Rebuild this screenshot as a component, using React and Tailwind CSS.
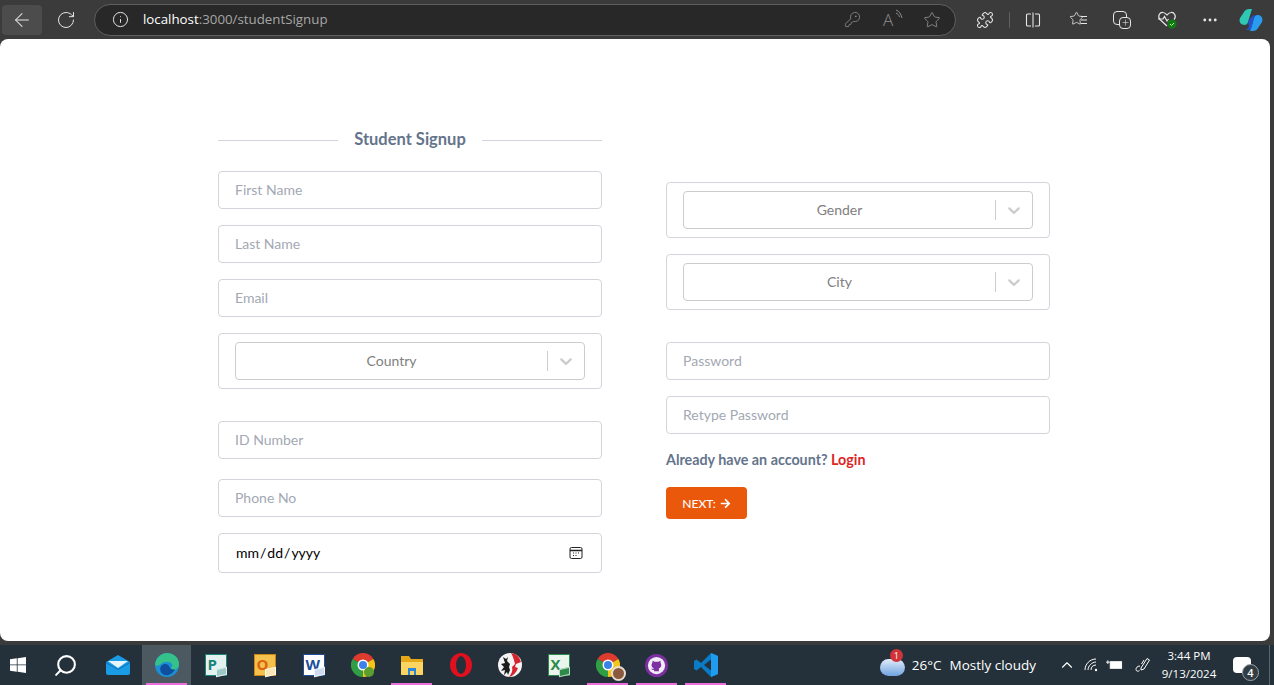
import { ArrowLeft, RotateCw, Info, KeyRound, Star, Puzzle, ChevronUp, Search, MoreHorizontal, Plus } from "lucide-react";
import { FaArrowRight } from "react-icons/fa";

const inputClass =
  "block w-full h-[38px] px-4 pb-0.5 rounded border border-[#d1d5db] bg-white text-sm text-gray-700 placeholder:text-[#a3a8b3] outline-none";

const Field = ({ placeholder, className = "" }) => (
  <input type="text" placeholder={placeholder} className={`${inputClass} ${className}`} />
);

const SelectBox = ({ label, className = "" }) => (
  <div className={`h-14 px-4 flex items-center rounded border border-[#d1d5db] ${className}`}>
    <div className="flex-1 h-[38px] flex items-center rounded border border-[#cccccc]">
      <span className="flex-1 text-center text-sm text-[#808080]">{label}</span>
      <span className="w-px h-5 bg-[#cccccc]" />
      <span className="w-9 flex justify-center text-[#cccccc]">
        <svg viewBox="0 0 20 20" className="w-5 h-5" fill="currentColor">
          <path d="M4.516 7.548c0.436-0.446 1.043-0.481 1.576 0l3.908 3.747 3.908-3.747c0.533-0.481 1.141-0.446 1.574 0 0.436 0.445 0.408 1.197 0 1.615-0.406 0.418-4.695 4.502-4.695 4.502-0.217 0.223-0.502 0.335-0.787 0.335s-0.57-0.112-0.789-0.335c0 0-4.287-4.084-4.695-4.502s-0.436-1.17 0-1.615z" />
        </svg>
      </span>
    </div>
  </div>
);

const Slot = ({ children, active, running }) => (
  <div className={`relative w-[49px] h-10 flex items-center justify-center ${active ? "bg-[#4c5961]" : ""}`}>
    {children}
    {running && <span className="absolute bottom-0 left-1 right-1 h-0.5 bg-[#e86fdc]" />}
  </div>
);

// old office style tile: coloured square with a letter and a little sheet at the corner
const OfficeTile = ({ letter, tile, edge, sheet, color = "text-white" }) => (
  <div className={`relative w-[22px] h-[22px] border text-[15px] leading-[18px] font-bold pl-0.5 ${tile} ${edge} ${color}`}>
    {letter}
    <span className={`absolute -right-px -bottom-px w-[11px] h-2 -skew-y-12 border border-white/70 ${sheet}`} />
  </div>
);

const BrowserBar = () => (
  <div className="h-[39px] flex items-center bg-[#3b3b3b] text-[#e6e6e6]">
    <div className="ml-0.5 w-10 h-[30px] flex items-center justify-center rounded bg-[#4c4c4c]">
      <ArrowLeft size={22} strokeWidth={1.1} />
    </div>
    <div className="w-12 flex justify-center">
      <RotateCw size={20} strokeWidth={1.2} />
    </div>
    <div className="ml-1 w-[862px] h-[32px] flex items-center rounded-full border border-[#5f5f5f] bg-[#282828] font-['Open_Sans',sans-serif]">
      <Info size={17} strokeWidth={1.4} className="ml-[17px]" />
      <span className="ml-[14px] text-[13.3px] text-white font-medium">
        localhost<span className="text-[#a6a6a6] font-normal">:3000/studentSignup</span>
      </span>
      <div className="ml-auto mr-[14px] flex items-center gap-[22px] text-[#8c8c8c]">
        <KeyRound size={17} strokeWidth={1.2} />
        <span className="relative w-[18px] text-[17px] leading-none font-light">
          A
          <svg viewBox="0 0 8 10" className="absolute -top-0.5 -right-0.5 w-2 h-2.5" fill="none" stroke="currentColor">
            <path d="M1 1c3 1 5 4 6 8M1 4c2 1 3 2 3.500 4" />
          </svg>
        </span>
        <Star size={18} strokeWidth={1.2} />
      </div>
    </div>
    <Puzzle size={18} strokeWidth={1.4} className="ml-5" />
    <span className="ml-[15px] w-px h-4 bg-[#5f5f5f]" />
    <svg viewBox="0 0 16 16" className="ml-[15px] w-4 h-4" fill="none" stroke="currentColor" strokeWidth="1.100">
      <path d="M6 2H2.500a1 1 0 0 0-1 1v10a1 1 0 0 0 1 1H6M10 2h3.500a1 1 0 0 1 1 1v10a1 1 0 0 1-1 1H10M8 .5v15" />
    </svg>
    <span className="relative ml-[28px] w-[18px] h-[18px]">
      <Star size={15} strokeWidth={1.3} className="absolute left-0 top-0" />
      <svg viewBox="0 0 6 9" className="absolute right-0 top-1 w-1.5 h-2.5" stroke="currentColor">
        <path d="M0 1h6M0 4.500h6M0 8h6" />
      </svg>
    </span>
    <span className="relative ml-[26px] w-[18px] h-[18px]">
      <span className="absolute left-0 top-0 w-[14px] h-[14px] rounded border border-[#e6e6e6]" />
      <span className="absolute right-0 bottom-0 w-3 h-3 flex items-center justify-center rounded-sm border border-[#e6e6e6] bg-[#3b3b3b]">
        <Plus size={9} strokeWidth={1.5} />
      </span>
    </span>
    <svg viewBox="0 0 20 18" className="ml-[26px] w-5 h-[18px]" fill="none">
      <path d="M10 15 3 8.500C0 5 3 1 6 1.500c2 .2 3 1.500 4 2.500 1-1 2-2.300 4-2.500 3-.5 6 3.500 3 7" stroke="#e6e6e6" strokeWidth="1.200" />
      <path d="M1 8h5l1.500-2.500L10 10l1.500-2" stroke="#e6e6e6" strokeWidth="1.200" />
      <circle cx="15" cy="13" r="4.500" fill="#107c10" />
      <path d="m13 13 1.500 1.500L17 12" stroke="#bfe5bf" strokeWidth="1" />
    </svg>
    <MoreHorizontal size={18} strokeWidth={1.8} className="ml-[24px]" />
    <svg viewBox="0 0 24 24" className="ml-5 w-6 h-6">
      <path d="M5 4c1-2 3-3 5-3h3L9 14c-.5 2-2 3-3.500 3C2 17-.5 14 1 10z" fill="#2fc8b4" />
      <path d="M19 20c-1 2-3 3-5 3h-3l4-13c.5-2 2-3 3.500-3 3.500 0 6 3 4.500 7z" fill="#2a9cf0" />
      <path d="M9 14c3-6 6-7 8-7-1 .5-1.500 2-2 3l-2 8c-.5 3-2 4-4 4-1 0-2-.5-2-1 2 0 2.500-1 3-3z" fill="#2452c8" />
    </svg>
  </div>
);

const Taskbar = () => (
  <div className="h-10 flex items-center bg-[#24313a] text-white font-['Open_Sans',sans-serif]">
    <div className="w-[36px] flex justify-center">
      <svg viewBox="0 0 16 16" className="w-4 h-4" fill="#fff">
        <path d="M0 2.300 6.800 1.300v6.200H0zM7.600 1.200 16 0v7.500H7.600zM0 8.300h6.800v6.400L0 13.700zM7.600 8.300H16V16l-8.400-1.200z" />
      </svg>
    </div>
    <div className="w-[57px] flex justify-center pl-0.5">
      <Search size={25} strokeWidth={2} className="-scale-x-100" />
    </div>
    <Slot>
      <svg viewBox="0 0 24 20" className="w-6 h-5">
        <path d="M12 0 24 7v11a2 2 0 0 1-2 2H2a2 2 0 0 1-2-2V7z" fill="#1a9be6" />
        <path d="M2 6h20L12 13z" fill="#e8f4fc" />
        <path d="M0 7l12 7 12-7v1L12 15 0 8z" fill="#0f6fb5" />
      </svg>
    </Slot>
    <Slot active running>
      <svg viewBox="0 0 24 24" className="w-6 h-6">
        <circle cx="12" cy="12" r="12" fill="#1c8fd6" />
        <path d="M0 12C1 4 7 0 12 0c7 0 12 5 12 11 0 4-3 6-6 6-2 0-4-1-4-2 3 0 4-2 3-4-2-3-8-3-11 0-3 2-4 2-6 1z" fill="#35c28a" />
        <path d="M6 13c3-3 7-2 8 0 1 3 4 4 6 3-2 5-7 7-10 6-4-1-6-5-4-9z" fill="#0f4f9e" />
      </svg>
    </Slot>
    <Slot>
      <OfficeTile letter="P" tile="bg-[#e4f1ef]" edge="border-[#17847a]" sheet="bg-[#9cc9c3]" color="text-[#17847a]" />
    </Slot>
    <Slot>
      <OfficeTile letter="O" tile="bg-[#f4c04e]" edge="border-[#c98613]" sheet="bg-[#fbe6b6]" color="text-[#d9650e]" />
    </Slot>
    <Slot>
      <OfficeTile letter="W" tile="bg-white" edge="border-[#1d4f9c]" sheet="bg-[#cfdcf0]" color="text-[#1d4f9c]" />
    </Slot>
    <Slot>
      <svg viewBox="0 0 24 24" className="w-6 h-6">
        <path d="M12 12 22.400 6A12 12 0 0 0 1.600 6z" fill="#dc3b2e" />
        <path d="M12 12 1.600 6A12 12 0 0 0 12 24z" fill="#2f9e44" />
        <path d="M12 12 12 24A12 12 0 0 0 22.400 6z" fill="#f5c518" />
        <circle cx="12" cy="12" r="5.500" fill="#fff" />
        <circle cx="12" cy="12" r="4" fill="#3b82e8" />
        <circle cx="18" cy="19" r="5" fill="#5a9e2f" />
      </svg>
    </Slot>
    <Slot running>
      <svg viewBox="0 0 22 20" className="w-[22px] h-5">
        <path d="M0 1h8l2 3h12v15a1 1 0 0 1-1 1H1a1 1 0 0 1-1-1z" fill="#e6a817" />
        <path d="M0 7h22v12a1 1 0 0 1-1 1H1a1 1 0 0 1-1-1z" fill="#fcd462" />
        <path d="M7 13h8v7h-2v-4H9v4H7z" fill="#2a86d8" />
      </svg>
    </Slot>
    <Slot>
      <svg viewBox="0 0 24 24" className="w-6 h-6">
        <ellipse cx="12" cy="12" rx="11" ry="12" fill="#e0101f" />
        <ellipse cx="12" cy="12" rx="5" ry="9" fill="#24313a" />
      </svg>
    </Slot>
    <Slot>
      <svg viewBox="0 0 24 24" className="w-6 h-6">
        <circle cx="12" cy="12" r="12" fill="#f4f4f4" />
        <path d="M13 0a12 12 0 0 1 10 9l-5 2-1 3 3 1c-2 5-5 8-9 9 3-4 4-7 3-10l3-3c-1-4-2-8-4-11z" fill="#d8232f" />
        <path d="M5 4l2 6-4 1 3 3-3 4 4-1-1 5 3-3 1 3 2-5-1-3 1-3-3-3 1-4-2 2z" fill="#1c1c1c" />
      </svg>
    </Slot>
    <Slot>
      <OfficeTile letter="X" tile="bg-[#eaf5ee]" edge="border-[#2c8a4b]" sheet="bg-[#2c8a4b]" color="text-[#2c8a4b]" />
    </Slot>
    <Slot running>
      <div className="relative">
        <svg viewBox="0 0 24 24" className="w-6 h-6">
          <path d="M12 12 22.400 6A12 12 0 0 0 1.600 6z" fill="#dc3b2e" />
          <path d="M12 12 1.600 6A12 12 0 0 0 12 24z" fill="#2f9e44" />
          <path d="M12 12 12 24A12 12 0 0 0 22.400 6z" fill="#f5c518" />
          <circle cx="12" cy="12" r="5.500" fill="#fff" />
          <circle cx="12" cy="12" r="4" fill="#3b82e8" />
        </svg>
        <span className="absolute -right-1.5 -bottom-1 w-[15px] h-[15px] rounded-full bg-[#8a5a3c] border-2 border-[#e8ddd0]" />
      </div>
    </Slot>
    <Slot running>
      <svg viewBox="0 0 24 24" className="w-[23px] h-[23px]">
        <circle cx="12" cy="12" r="12" fill="#7b2fa0" />
        <circle cx="12" cy="12" r="9" fill="#f3ecf7" />
        <path d="M8 7l2 1.200h4L16 7l.5 3c1 2 .5 4-2 5v3h-5v-1.500c-1.500.3-2.500-.3-3-1.500 1 .5 2 .5 3 0-2.500-1-3.500-3-2-5.500z" fill="#7b2fa0" />
      </svg>
    </Slot>
    <Slot running>
      <svg viewBox="0 0 24 24" className="w-6 h-6">
        <path d="M17 0 7 10 2.500 6.500 0 8v8l2.500 1.500L7 14l10 10 7-3V3z" fill="#0a7cc7" />
        <path d="M17 6.500 10 12l7 5.500z" fill="#24313a" />
        <path d="M17 0l7 3v18l-7 3z" fill="#1f9cf0" />
      </svg>
    </Slot>

    <div className="ml-auto flex items-center">
      <div className="relative w-[25px] h-[17px] mt-1 rounded-full bg-gradient-to-b from-[#e3ecf8] to-[#6ea4e0]">
        <span className="absolute -top-2.5 right-0.5 w-[13px] h-[13px] rounded-full bg-[#d13438] text-[9px] leading-[13px] text-center">1</span>
      </div>
      <span className="ml-[7px] text-[13.5px]">26°C</span>
      <span className="ml-2 text-[13.5px]">Mostly cloudy</span>
      <ChevronUp size={18} strokeWidth={1.5} className="ml-[22px]" />
      <svg viewBox="0 0 14 14" className="ml-[8px] w-[14px] h-[14px]" fill="none" stroke="#fff" strokeWidth="1">
        <path d="M1 12C1 6 6 1 12 1M4 12c0-4 4-8 8-8M7 12c0-3 2-5 5-5" />
        <circle cx="12" cy="12" r="1.200" fill="#fff" stroke="none" />
      </svg>
      <svg viewBox="0 0 18 12" className="ml-[8px] w-[17px] h-3" fill="none" stroke="#fff">
        <rect x="4.500" y="2.500" width="12" height="7" fill="#fff" />
        <path d="M0 3h4M2 1v4" />
      </svg>
      <svg viewBox="0 0 16 16" className="ml-[12px] w-4 h-4" fill="none" stroke="#fff" strokeWidth="1">
        <path d="m6 11 6-9.500 2.500 1.500L9 12l-3 1zM9 3 6.500 7M5 9c-3 0-4 2-4 3.500S3 15 4.500 13.500" />
      </svg>
      <div className="ml-[5px] w-[66px] flex flex-col items-center text-[11.5px] leading-[18px]">
        <span>3:44 PM</span>
        <span>9/13/2024</span>
      </div>
      <div className="relative ml-[11px] w-[18px] h-[16px] bg-white rounded-sm">
        <span className="absolute -right-2 -bottom-2 w-[17px] h-[17px] rounded-full bg-[#333d44] border border-[#9aa3a8] text-[11px] leading-[15px] text-center font-semibold">4</span>
      </div>
      <span className="ml-[18px] w-px h-10 bg-[#5a656c] mr-1" />
    </div>
  </div>
);

export default function App() {
  return (
    <div className="w-[1274px] h-[685px] overflow-hidden bg-[#3b3b3b] font-['Lato',sans-serif]">
      <BrowserBar />
      <main className="h-[602px] mr-1 rounded-lg bg-white flex gap-16 pl-[218px] pt-[90px]">
        <div className="w-96">
          <div className="h-5 flex items-center">
            <span className="flex-1 h-px bg-[#d1d5db] mt-0.5" />
            <span className="px-4 text-[16.5px] font-bold text-[#64748b] leading-5">Student Signup</span>
            <span className="flex-1 h-px bg-[#d1d5db] mt-0.5" />
          </div>
          <Field placeholder="First Name" className="mt-[22px]" />
          <Field placeholder="Last Name" className="mt-4" />
          <Field placeholder="Email" className="mt-4" />
          <SelectBox label="Country" className="mt-4" />
          <Field placeholder="ID Number" className="mt-8" />
          <Field placeholder="Phone No" className="mt-5" />
          <div className="relative mt-4">
            <input type="date" className="block w-full h-10 px-4 rounded border border-[#d1d5db] bg-white text-sm text-black outline-none [&::-webkit-calendar-picker-indicator]:opacity-0" />
            <svg viewBox="0 0 14 14" className="absolute right-[19px] top-[13px] w-[14px] h-[14px] pointer-events-none" fill="none" stroke="#222">
              <rect x="1" y="1.500" width="12" height="11" rx="1.500" />
              <path d="M1 4.500h12" strokeWidth="1.500" />
              <path d="M4 7h1M6.500 7h1M9 7h1M4 9.500h1M6.500 9.500h1" />
            </svg>
          </div>
        </div>
        <div className="w-96 pt-[53px]">
          <SelectBox label="Gender" />
          <SelectBox label="City" className="mt-4" />
          <Field placeholder="Password" className="mt-8" />
          <Field placeholder="Retype Password" className="mt-4" />
          <p className="mt-4 text-[14.3px] leading-5 font-bold text-[#64748b]">
            Already have an account? <span className="text-[#dc2626]">Login</span>
          </p>
          <button className="mt-[17px] h-8 w-[81px] pt-px flex items-center justify-center gap-1 rounded bg-[#ea580c] text-white text-xs font-medium">
            NEXT: <FaArrowRight size={11} />
          </button>
        </div>
      </main>
      <div className="h-1" />
      <Taskbar />
    </div>
  );
}
